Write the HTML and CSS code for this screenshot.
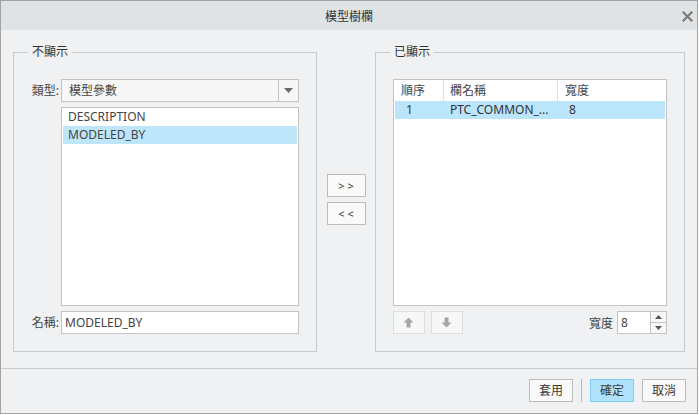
FILE: index.html
```html
<!DOCTYPE html>
<html lang="zh-Hant">
<head>
<meta charset="utf-8">
<title>模型樹欄</title>
<link rel="stylesheet" href="styles.css">
</head>
<body>
<div class="dialog">
  <div class="titlebar">
    <span class="spacer"></span>
    <span class="title">模型樹欄</span>
    <span class="close">
      <svg width="11" height="11" viewBox="0 0 11 11"><path d="M1.5 1.5 L9.5 9.5 M9.5 1.5 L1.5 9.5" stroke="#7a7a7a" stroke-width="2.2" stroke-linecap="square"/></svg>
    </span>
  </div>
  <div class="content">
    <div class="group group-left">
      <span class="legend">不顯示</span>
      <div class="form">
        <span class="lbl">類型:</span>
        <div class="combo">
          <span class="combo-text">模型參數</span>
          <span class="combo-btn"><svg width="9" height="5" viewBox="0 0 9 5"><path d="M0 0 H9 L4.5 5 Z" fill="#6a6a6a"/></svg></span>
        </div>
        <span class="lbl"></span>
        <div class="list">
          <div class="item">DESCRIPTION</div>
          <div class="item selected">MODELED_BY</div>
        </div>
        <span class="lbl">名稱:</span>
        <div class="input">MODELED_BY</div>
      </div>
    </div>
    <div class="middle">
      <button class="btn-move">&gt; &gt;</button>
      <button class="btn-move">&lt; &lt;</button>
    </div>
    <div class="group group-right">
      <span class="legend">已顯示</span>
      <div class="table">
        <div class="thead">
          <div class="th c1">順序</div>
          <div class="th c2">欄名稱</div>
          <div class="th c3">寬度</div>
        </div>
        <div class="tbody">
          <div class="tr selected">
            <div class="td c1">1</div>
            <div class="td c2">PTC_COMMON_...</div>
            <div class="td c3">8</div>
          </div>
        </div>
      </div>
      <div class="tools">
        <button class="btn-arrow"><svg width="11" height="11" viewBox="0 0 11 11"><path d="M5.5 0.5 L10.5 5.5 H7.5 V10.5 H3.5 V5.5 H0.5 Z" fill="#a6a6a6"/></svg></button>
        <button class="btn-arrow"><svg width="11" height="11" viewBox="0 0 11 11"><path d="M5.5 10.5 L10.5 5.5 H7.5 V0.5 H3.5 V5.5 H0.5 Z" fill="#a6a6a6"/></svg></button>
        <span class="fill"></span>
        <span class="width-lbl">寬度</span>
        <div class="spinner">
          <span class="spin-val">8</span>
          <span class="spin-btns">
            <span class="spin-up"><svg width="7" height="4" viewBox="0 0 7 4"><path d="M0 4 H7 L3.5 0 Z" fill="#555"/></svg></span>
            <span class="spin-down"><svg width="7" height="4" viewBox="0 0 7 4"><path d="M0 0 H7 L3.5 4 Z" fill="#555"/></svg></span>
          </span>
        </div>
      </div>
    </div>
  </div>
  <div class="footer">
    <button class="btn">套用</button>
    <span class="vsep"></span>
    <button class="btn primary">確定</button>
    <button class="btn">取消</button>
  </div>
</div>
</body>
</html>
```
FILE: styles.css
```css
* { box-sizing: border-box; }
html, body { margin: 0; padding: 0; background: #ffffff; }
body {
  font-family: "Noto Sans", "Noto Sans CJK TC", sans-serif;
  font-size: 12px;
  color: #3a3a3a;
}
button { font-family: inherit; font-size: 12px; color: #3a3a3a; padding: 0; margin: 0; cursor: default; }

.dialog {
  width: 698px;
  height: 414px;
  border: 1px solid #a3a3a3;
  background: #f0f1f3;
  display: flex;
  flex-direction: column;
}

.titlebar {
  height: 29px;
  flex: none;
  background: #e0e3e5;
  display: grid;
  grid-template-columns: 1fr auto 1fr;
  align-items: center;
}
.title { line-height: 16px; padding-top: 2px; color: #333; }
.close { justify-self: end; margin-right: 4px; display: flex; padding-top: 2px; }

.content {
  flex: none;
  display: flex;
  padding: 22px 12px 0 12px;
}

.group {
  position: relative;
  height: 300px;
  border: 1px solid #c9cacc;
  padding: 26px 17px 0 17px;
}
.group-left { width: 305px; }
.group-right { width: 311px; }
.legend {
  position: absolute;
  left: 14px;
  top: -9px;
  padding: 0 4px;
  line-height: 16px;
  background: #f0f1f3;
  color: #333;
}

.form {
  display: grid;
  grid-template-columns: 28px 1fr;
  column-gap: 2px;
  row-gap: 5px;
  grid-template-rows: 23px 199px 23px;
}
.lbl { text-align: right; line-height: 23px; color: #444; font-size: 12px; white-space: nowrap; }

.combo {
  display: flex;
  border: 1px solid #c4c4c4;
  background: #f7f7f7;
}
.combo-text { flex: 1; padding-left: 7px; line-height: 21px; color: #444; }
.combo-btn {
  width: 20px;
  border-left: 1px solid #c4c4c4;
  display: flex;
  align-items: center;
  justify-content: center;
}

.list {
  border: 1px solid #c4c4c4;
  background: #ffffff;
  padding: 0 1px;
}
.item { height: 18px; line-height: 18px; padding-left: 5px; color: #444; }
.item.selected { background: #bde6fb; }

.input {
  border: 1px solid #c4c4c4;
  background: #ffffff;
  line-height: 21px;
  padding-left: 3px;
  color: #444;
}

.middle {
  width: 58px;
  display: flex;
  flex-direction: column;
  align-items: center;
  padding-top: 122px;
  gap: 5px;
}
.btn-move {
  width: 39px;
  height: 23px;
  border: 1px solid #bcbcbc;
  background: #f9f9f9;
  font-size: 11px;
  line-height: 21px;
}

.table {
  height: 227px;
  border: 1px solid #c4c4c4;
  background: #ffffff;
  display: flex;
  flex-direction: column;
}
.thead { display: flex; height: 21px; flex: none; }
.th { line-height: 21px; color: #444; }
.th.c1 { width: 50px; padding-left: 7px; border-right: 1px solid #e0e0e0; }
.th.c2 { width: 114px; padding-left: 6px; border-right: 1px solid #e0e0e0; }
.th.c3 { flex: 1; padding-left: 7px; }
.tbody { padding: 0 1px; }
.tr { display: flex; height: 18px; }
.tr.selected { background: #bbe5fb; }
.td { line-height: 18px; color: #333; }
.td.c1 { width: 49px; padding-left: 11px; }
.td.c2 { width: 114px; padding-left: 6px; white-space: nowrap; }
.td.c3 { flex: 1; padding-left: 11px; }

.tools {
  display: flex;
  align-items: center;
  margin-top: 5px;
  height: 23px;
  gap: 6px;
}
.btn-arrow {
  width: 32px;
  height: 23px;
  border: 1px solid #dedede;
  background: #f6f7f7;
  display: flex;
  align-items: center;
  justify-content: center;
}
.fill { flex: 1; }
.width-lbl { color: #444; margin-right: -2px; }
.spinner {
  width: 50px;
  height: 23px;
  display: flex;
  border: 1px solid #c4c4c4;
  background: #ffffff;
}
.spin-val { flex: 1; padding-left: 3px; line-height: 21px; color: #444; }
.spin-btns {
  width: 16px;
  border-left: 1px solid #c4c4c4;
  display: flex;
  flex-direction: column;
  background: #f7f7f7;
}
.spin-up, .spin-down { flex: 1; display: flex; align-items: center; justify-content: center; }
.spin-up { border-bottom: 1px solid #c4c4c4; }

.footer {
  margin-top: 16px;
  border-top: 1px solid #c9cacc;
  padding: 10px 11px 0 0;
  display: flex;
  justify-content: flex-end;
  align-items: center;
  gap: 8px;
}
.btn {
  width: 44px;
  height: 23px;
  border: 1px solid #bdbdbd;
  background: #f9f9f9;
  line-height: 21px;
}
.btn.primary { background: #afe2fb; border-color: #7dcdf5; }
.vsep { width: 1px; height: 23px; background: #b8b8b8; }
```
